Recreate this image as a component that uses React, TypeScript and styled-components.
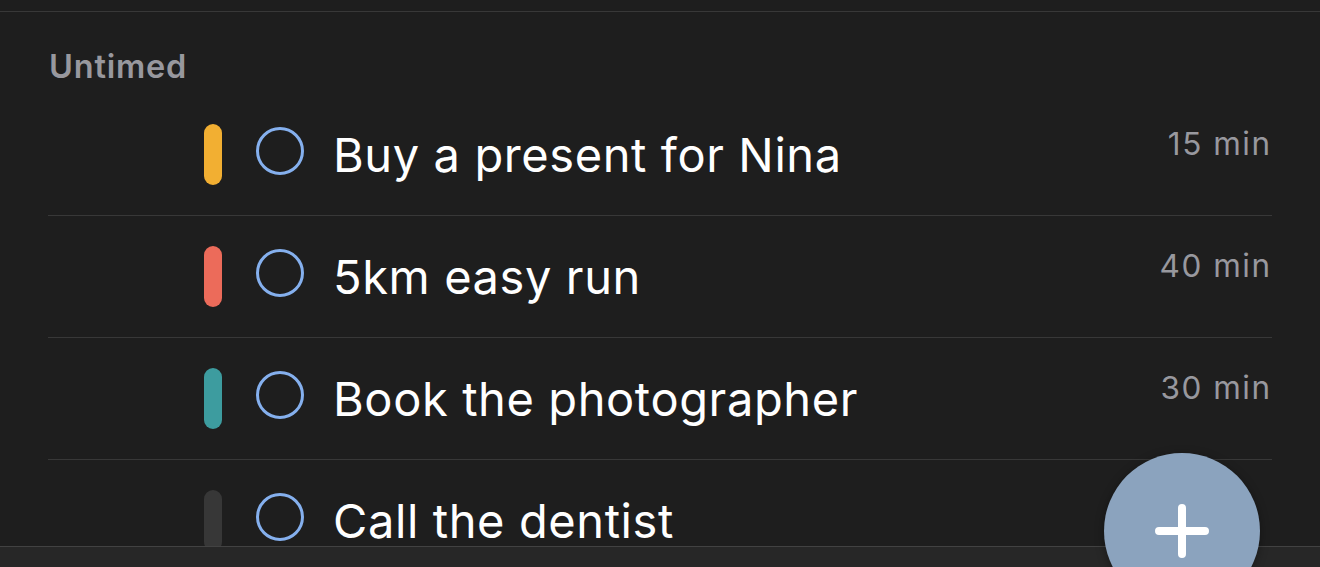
import React from "react";
import styled, { createGlobalStyle } from "styled-components";

const Global = createGlobalStyle`
  html, body {
    margin: 0;
    padding: 0;
    background: #1e1e1e;
    overflow: hidden;
  }
  body {
    font-family: Inter, "Noto Sans", "Liberation Sans", sans-serif;
    -webkit-font-smoothing: antialiased;
  }
`;

const Screen = styled.div`
  position: relative;
  width: 1320px;
  height: 567px;
  display: flex;
  flex-direction: column;
  background: #1e1e1e;
  overflow: hidden;
`;

const TopStrip = styled.div`
  height: 11px;
  flex: 0 0 auto;
  border-bottom: 1px solid #383838;
`;

const Main = styled.main`
  flex: 1 1 auto;
  min-height: 0;
  overflow: hidden;
  padding: 0 48px;
`;

const SectionTitle = styled.h2`
  margin: 0;
  padding: 35px 0 7px 1px;
  font-size: 32.5px;
  line-height: 40px;
  font-weight: 600;
  color: #98989e;
  letter-spacing: 0.8px;
`;

const List = styled.ul`
  list-style: none;
  margin: 0;
  padding: 0;
`;

const Row = styled.li`
  display: flex;
  align-items: center;
  height: 121px;
  padding: 0 0 0 156px;
  border-bottom: 1px solid #383838;
`;

const ColorBar = styled.span<{ $color: string }>`
  flex: 0 0 auto;
  width: 18px;
  height: 61px;
  border-radius: 9px;
  background: ${(p) => p.$color};
`;

const Check = styled.span`
  flex: 0 0 auto;
  box-sizing: border-box;
  width: 48px;
  height: 48px;
  margin: 0 29px 7px 34px;
  border-radius: 50%;
  border: 3.5px solid #85b0ee;
`;

const Title = styled.span`
  flex: 1 1 auto;
  font-size: 47px;
  line-height: 56px;
  font-weight: 400;
  letter-spacing: 0.6px;
  color: #ffffff;
  white-space: nowrap;
`;

const Duration = styled.span`
  align-self: flex-start;
  margin-top: 32px;
  margin-right: 0.5px;
  font-size: 31.5px;
  line-height: 36px;
  letter-spacing: 1.5px;
  color: #98989e;
  white-space: nowrap;
`;

const BottomBar = styled.div`
  height: 20px;
  flex: 0 0 auto;
  border-top: 1px solid #424242;
  background: #272727;
`;

const Fab = styled.button`
  position: absolute;
  right: 60px;
  bottom: -42px;
  width: 156px;
  height: 156px;
  padding: 0;
  border: none;
  border-radius: 50%;
  background: #8ba3be;
  box-shadow: 0 2px 10px rgba(0, 0, 0, 0.35);
  display: flex;
  align-items: flex-start;
  justify-content: center;
  cursor: pointer;
`;

const PlusIcon = styled.svg`
  margin-top: 51px;
`;

const tasks = [
  { title: "Buy a present for Nina", color: "#f2af32", time: "15 min" },
  { title: "5km easy run", color: "#ec6b5a", time: "40 min" },
  { title: "Book the photographer", color: "#3d9c9f", time: "30 min" },
  { title: "Call the dentist", color: "#373737", time: "" },
];

export default function App() {
  return (
    <Screen>
      <Global />
      <TopStrip />
      <Main>
        <SectionTitle>Untimed</SectionTitle>
        <List>
          {tasks.map((t) => (
            <Row key={t.title}>
              <ColorBar $color={t.color} />
              <Check />
              <Title>{t.title}</Title>
              {t.time && <Duration>{t.time}</Duration>}
            </Row>
          ))}
        </List>
      </Main>
      <BottomBar />
      <Fab aria-label="Add task">
        <PlusIcon width="54" height="54" viewBox="0 0 54 54">
          <path
            d="M27 4 V50 M4 27 H50"
            stroke="#ffffff"
            strokeWidth="8"
            strokeLinecap="round"
            fill="none"
          />
        </PlusIcon>
      </Fab>
    </Screen>
  );
}
